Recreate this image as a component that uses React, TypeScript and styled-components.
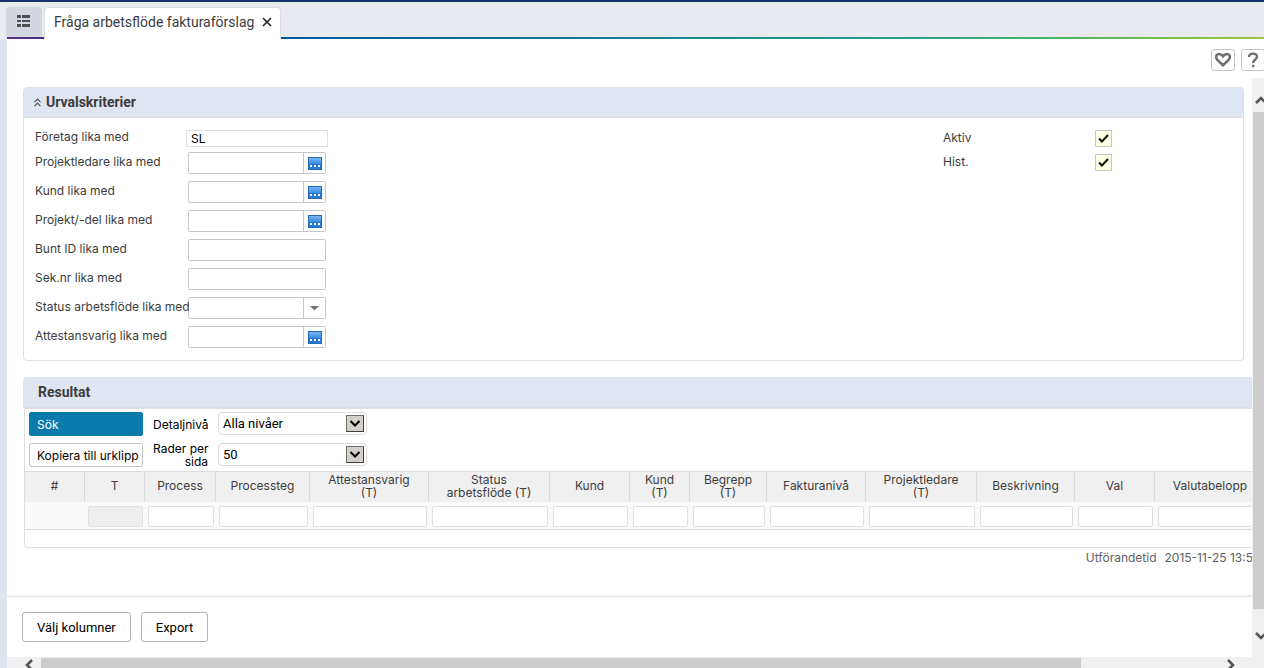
import React from "react";
import styled, { createGlobalStyle } from "styled-components";

const Global = createGlobalStyle`
  * { box-sizing: border-box; }
  body { margin: 0; background: #fff; color: #3c3c3c; overflow: hidden; }
  body, input, button, select { font-family: Inter, "Liberation Sans", sans-serif; font-size: 12px; }
  button { cursor: pointer; padding: 0; }
`;

const display = `font-family: Roboto, "Liberation Sans", sans-serif;`;

const Page = styled.div`
  display: flex;
  flex-direction: column;
  height: 100vh;
  border-top: 2px solid #16306a;
`;

const TabBar = styled.nav`
  display: flex;
  align-items: flex-end;
  gap: 2px;
  height: 37px;
  flex: none;
  padding-left: 6px;
  background:
    linear-gradient(90deg, #65338a 0, #3d2f85 44px, #00599a 280px, #1f9f8d 70%, #59b562 85%, #a2c43c 100%) 7px bottom / 100% 2px no-repeat,
    #eaebf0;
`;

const MenuTab = styled.button`
  display: grid;
  place-items: center;
  width: 36px;
  height: 30px;
  margin-bottom: 2px;
  border: 0;
  border-radius: 3px 3px 0 0;
  background: #d2d7e0;
  padding-bottom: 3px;
`;

const ActiveTab = styled.div`
  display: flex;
  align-items: center;
  gap: 7px;
  height: 32px;
  padding: 0 7px 3px 9px;
  border: 1px solid #dcdfe6;
  border-bottom: 0;
  border-radius: 4px 4px 0 0;
  background: #fff;
  ${display}
  font-size: 14px;
  white-space: nowrap;
`;

const CloseButton = styled.button`
  display: grid;
  place-items: center;
  width: 12px;
  height: 12px;
  border: 0;
  background: none;
`;

const Body = styled.div`
  display: flex;
  flex: 1;
  min-height: 0;
  border-left: 7px solid #e0e4ee;
`;

const Main = styled.main`
  display: flex;
  flex-direction: column;
  flex: 1;
  min-width: 0;
`;

const Toolbar = styled.div`
  display: flex;
  justify-content: flex-end;
  gap: 6px;
  height: 39px;
  flex: none;
  padding-top: 10px;
  overflow: hidden;
`;

const ToolButton = styled.button<{ $edge?: boolean }>`
  display: grid;
  place-items: center;
  width: 24px;
  height: 22px;
  margin-right: ${(p) => (p.$edge ? "-1px" : "0")};
  border: 1px solid #c6c6c6;
  border-radius: 3px;
  background: #fff;
`;

const Viewport = styled.div`
  display: flex;
  flex: 1;
  min-height: 0;
`;

const Column = styled.div`
  display: flex;
  flex-direction: column;
  flex: 1;
  min-width: 0;
`;

const Content = styled.div`
  flex: 1;
  min-height: 0;
  overflow: hidden;
  padding: 9px 0 0 16px;
`;

const Criteria = styled.section`
  margin-right: 8px;
  border: 1px solid #dedfe2;
  border-radius: 4px;
`;

const PanelHeader = styled.header<{ $inset?: boolean }>`
  display: flex;
  align-items: center;
  gap: 5px;
  height: ${(p) => (p.$inset ? "30px" : "31px")};
  padding: 0 0 1px ${(p) => (p.$inset ? "10px" : "15px")};
  border-bottom: 1px solid #dcdee2;
  border-radius: 4px 0 0 0;
  background: #dfe5f1;
`;

const Title = styled.h2`
  margin: 0;
  ${display}
  font-size: 14px;
  line-height: 16px;
  font-weight: 700;
`;

const CriteriaBody = styled.div`
  display: flex;
  justify-content: space-between;
  padding: 8px 12px 9px 11px;
`;

const Fields = styled.div`
  display: flex;
  flex-direction: column;
`;

const Field = styled.div<{ $compact?: boolean }>`
  display: flex;
  align-items: center;
  height: ${(p) => (p.$compact ? "22px" : "29px")};
`;

const FieldLabel = styled.label`
  position: relative;
  width: 151px;
  padding-bottom: 2px;
  white-space: nowrap;
`;

const PlainInput = styled.input`
  width: 142px;
  height: 17px;
  margin-top: 2px;
  padding: 0 4px;
  border: 1px solid #e0e0e0;
  color: #000;
`;

const Box = styled.div`
  display: flex;
  width: 138px;
  height: 22px;
  margin-left: 2px;
  border: 1px solid #c8c8c8;
  border-radius: 2px;
  overflow: hidden;
`;

const BoxInput = styled.input`
  flex: 1;
  min-width: 0;
  padding: 0 4px;
  border: 0;
  background: #fff;
`;

const BoxButton = styled.button`
  display: grid;
  place-items: center;
  width: 22px;
  padding-top: 1px;
  border: 0;
  border-left: 1px solid #c8c8c8;
  background: #fff;
`;

const Checks = styled.div`
  display: flex;
  flex-direction: column;
  width: 288px;
`;

const CheckRow = styled.div`
  display: flex;
  align-items: center;
  height: 24px;
`;

const CheckLabel = styled.label`
  width: 152px;
  padding-bottom: 2px;
`;

const CheckHolder = styled.span`
  position: relative;
  display: flex;
  svg { position: absolute; left: 3px; top: 4px; pointer-events: none; visibility: hidden; }
  input:checked + svg { visibility: visible; }
`;

const CheckInput = styled.input`
  appearance: none;
  width: 17px;
  height: 17px;
  margin: 0;
  border: 1px solid #c6c6c6;
  background: #ffffe6;
`;

const Result = styled.section`
  width: max-content;
  min-width: 100%;
  margin-top: 16px;
`;

const ResultBody = styled.div`
  margin-left: 1px;
  border: 1px solid #dedede;
  border-radius: 0 0 0 4px;
`;

const Controls = styled.div`
  display: grid;
  grid-template-columns: 114px 55px 149px;
  grid-auto-rows: 24px;
  column-gap: 10px;
  row-gap: 7px;
  align-items: start;
  padding: 3px 4px 4px;
  color: #000;
`;

const ActionButton = styled.button<{ $primary?: boolean }>`
  height: 24px;
  padding: 0 0 0 7px;
  border: 1px solid ${(p) => (p.$primary ? "#0d7aac" : "#c6c6c6")};
  border-radius: 2px;
  background: ${(p) => (p.$primary ? "#0d7aac" : "#fff")};
  color: ${(p) => (p.$primary ? "#fff" : "#000")};
  text-align: left;
  white-space: nowrap;
`;

const ControlLabel = styled.label`
  align-self: center;
  text-align: right;
  line-height: 13px;
  white-space: pre;
`;

const SelectHolder = styled.span`
  position: relative;
  display: flex;
  svg { position: absolute; right: 3px; top: 3px; pointer-events: none; }
`;

const Select = styled.select`
  appearance: none;
  width: 100%;
  height: 23px;
  padding: 0 4px;
  border: 1px solid #dcdcdc;
  border-radius: 4px;
  background: #fff;
  color: #000;
  ${display}
  font-size: 13px;
`;

const Table = styled.table`
  table-layout: fixed;
  border-collapse: separate;
  border-spacing: 0;
  width: 1241px;
  border-top: 1px solid #dcdcdc;
  border-bottom: 1px solid #dcdcdc;
`;

const HeadCell = styled.th`
  height: 30px;
  padding: 0 8px 3px;
  border-right: 1px solid #dadada;
  background: #f0f0f0;
  font-weight: 400;
  line-height: 13px;
  text-align: center;
  white-space: pre-line;
`;

const FilterCell = styled.td`
  height: 27px;
  padding: 1px 2px 0 3px;
  background: #fafafa;
`;

const FilterInput = styled.input`
  display: block;
  width: 100%;
  height: 21px;
  border: 1px solid #e0e0e0;
  border-radius: 2px;
  background: #fff;
  &:disabled { background: #eee; }
`;

const TableEnd = styled.div`
  height: 17px;
`;

const Timing = styled.p`
  display: flex;
  justify-content: flex-end;
  gap: 8px;
  margin: 2px 0 0;
  padding-right: 14px;
  line-height: 16px;
  color: #5f5f5f;
`;

const Footer = styled.footer`
  display: flex;
  align-items: center;
  gap: 10px;
  height: 61px;
  flex: none;
  padding-left: 15px;
  border-top: 1px solid #e6e6e6;
  box-shadow: 0 -1px 1px #f2f2f2;
`;

const FooterButton = styled.button`
  height: 30px;
  padding: 0 14px;
  border: 1px solid #b4b4b4;
  border-radius: 3px;
  background: #fff;
  color: #000;
  ${display}
  font-size: 13px;
`;

const VScroll = styled.div`
  display: flex;
  flex-direction: column;
  width: 12px;
  flex: none;
  overflow: hidden;
  background: #f0f0f0;
`;

const VThumb = styled.div`
  flex: 1;
  width: 15px;
  margin-left: 1px;
  background: #cdcdcd;
`;

const VArrow = styled.button<{ $end?: boolean }>`
  display: grid;
  place-items: center;
  width: 17px;
  height: ${(p) => (p.$end ? "48px" : "34px")};
  padding: ${(p) => (p.$end ? "6px 0 0" : "10px 0 0")};
  border: 0;
  background: none;
`;

const HScroll = styled.div`
  display: flex;
  align-items: flex-start;
  height: 11px;
  flex: none;
  overflow: hidden;
  background: #f0f0f0;
  padding-right: 25px;
`;

const HThumb = styled.div`
  flex: 1;
  height: 15px;
  margin-top: 1px;
  background: #cdcdcd;
`;

const HArrow = styled.button<{ $end?: boolean }>`
  display: flex;
  justify-content: flex-end;
  width: ${(p) => (p.$end ? "158px" : "34px")};
  padding: 2px ${(p) => (p.$end ? "4px" : "8px")} 0 0;
  border: 0;
  background: none;
`;

const Chevron = ({ points, w, h }: { points: string; w: number; h: number }) => (
  <svg width={w} height={h} viewBox={`0 0 ${w} ${h}`} fill="none" stroke="#555" strokeWidth="2.6">
    <polyline points={points} />
  </svg>
);

const LookupIcon = () => (
  <svg width="14" height="13" viewBox="0 0 14 13">
    <defs>
      <linearGradient id="lookup" x1="0" y1="0" x2="0" y2="1">
        <stop offset="0" stopColor="#7db9f5" />
        <stop offset="0.5" stopColor="#3b8fe8" />
        <stop offset="0.55" stopColor="#1f74d2" />
        <stop offset="1" stopColor="#2b80da" />
      </linearGradient>
    </defs>
    <rect x="0.5" y="0.5" width="13" height="12" fill="url(#lookup)" stroke="#2468b4" />
    <path d="M2 8h2v2H2zM6 8h2v2H6zM10 8h2v2h-2z" fill="#fff" />
  </svg>
);

const SelectArrow = () => (
  <svg width="18" height="17" viewBox="0 0 18 17">
    <rect x="0.5" y="0.5" width="17" height="16" fill="#d4d0c8" stroke="#6e6e6e" />
    <path d="M0.5 16.5h17V0.5" fill="none" stroke="#404040" />
    <path d="M4.5 6l4.5 4.5L13.5 6" fill="none" stroke="#000" strokeWidth="2" />
  </svg>
);

type Kind = "plain" | "lookup" | "text" | "drop";
const fields: { id: string; label: string; kind: Kind }[] = [
  { id: "foretag", label: "Företag lika med", kind: "plain" },
  { id: "projektledare", label: "Projektledare lika med", kind: "lookup" },
  { id: "kund", label: "Kund lika med", kind: "lookup" },
  { id: "projekt", label: "Projekt/-del lika med", kind: "lookup" },
  { id: "bunt", label: "Bunt ID lika med", kind: "text" },
  { id: "seknr", label: "Sek.nr lika med", kind: "text" },
  { id: "status", label: "Status arbetsflöde lika med", kind: "drop" },
  { id: "attest", label: "Attestansvarig lika med", kind: "lookup" },
];

const columns: [string, number][] = [
  ["#", 60], ["T", 60], ["Process", 71], ["Processteg", 94], ["Attestansvarig\n(T)", 119],
  ["Status\narbetsflöde (T)", 121], ["Kund", 80], ["Kund\n(T)", 60], ["Begrepp\n(T)", 77],
  ["Fakturanivå", 99], ["Projektledare\n(T)", 111], ["Beskrivning", 98], ["Val", 80], ["Valutabelopp", 111],
];

export default function App() {
  return (
    <Page>
      <Global />
      <TabBar>
        <MenuTab aria-label="Meny">
          <svg width="14" height="14" viewBox="0 0 14 14" fill="#505050">
            <path d="M0 1h4v3H0zM5 1h8v3H5zM0 6h4v2H0zM5 6h8v2H5zM0 10h4v3H0zM5 10h8v3H5z" />
          </svg>
        </MenuTab>
        <ActiveTab>
          <span>Fråga arbetsflöde fakturaförslag</span>
          <CloseButton aria-label="Stäng">
            <svg width="10" height="10" viewBox="0 0 10 10" stroke="#222" strokeWidth="1.6">
              <path d="M1 1l8 8M9 1l-8 8" />
            </svg>
          </CloseButton>
        </ActiveTab>
      </TabBar>
      <Body>
        <Main>
          <Toolbar>
            <ToolButton aria-label="Favorit">
              <svg width="18" height="16" viewBox="0 0 18 16" fill="none" stroke="#707070" strokeWidth="2.6">
                <path d="M9 13.2L3.2 7.6C1 5 2.400 2 5 2C7 2 8.200 3 9 4.200C9.800 3 11 2 13 2C15.600 2 17 5 14.800 7.600Z" />
              </svg>
            </ToolButton>
            <ToolButton $edge aria-label="Hjälp">
              <svg width="12" height="16" viewBox="0 0 12 16" fill="none" stroke="#707070" strokeWidth="2.4">
                <path d="M2 5C2 0.5 10 0.5 10 4.7C10 7.5 6.2 7.5 6.2 11" />
                <path d="M6.2 12.8v2.4" />
              </svg>
            </ToolButton>
          </Toolbar>
          <Viewport>
            <Column>
              <Content>
                <Criteria>
                  <PanelHeader $inset>
                    <svg width="7" height="9" viewBox="0 0 7 9" fill="none" stroke="#555" strokeWidth="1.2">
                      <path d="M0.5 4.2l3-3l3 3M0.5 8.2l3-3l3 3" />
                    </svg>
                    <Title>Urvalskriterier</Title>
                  </PanelHeader>
                  <CriteriaBody>
                    <Fields>
                      {fields.map((f) => (
                        <Field key={f.id} $compact={f.kind === "plain"}>
                          <FieldLabel htmlFor={f.id}>{f.label}</FieldLabel>
                          {f.kind === "plain" ? (
                            <PlainInput id={f.id} defaultValue="SL" />
                          ) : (
                            <Box>
                              <BoxInput id={f.id} />
                              {f.kind === "lookup" && (
                                <BoxButton aria-label={`Sök ${f.label}`}><LookupIcon /></BoxButton>
                              )}
                              {f.kind === "drop" && (
                                <BoxButton aria-label={`Välj ${f.label}`}>
                                  <svg width="9" height="5" viewBox="0 0 9 5"><path d="M0 0h9L4.5 4.5z" fill="#777" /></svg>
                                </BoxButton>
                              )}
                            </Box>
                          )}
                        </Field>
                      ))}
                    </Fields>
                    <Checks>
                      {["Aktiv", "Hist."].map((name) => (
                        <CheckRow key={name}>
                          <CheckLabel htmlFor={name}>{name}</CheckLabel>
                          <CheckHolder>
                            <CheckInput id={name} type="checkbox" defaultChecked />
                            <svg width="11" height="9" viewBox="0 0 11 9" fill="none" stroke="#111" strokeWidth="2">
                              <path d="M1 4.5l3 3L10 1" />
                            </svg>
                          </CheckHolder>
                        </CheckRow>
                      ))}
                    </Checks>
                  </CriteriaBody>
                </Criteria>
                <Result>
                  <PanelHeader><Title>Resultat</Title></PanelHeader>
                  <ResultBody>
                    <Controls>
                      <ActionButton $primary>Sök</ActionButton>
                      <ControlLabel htmlFor="detalj">Detaljnivå</ControlLabel>
                      <SelectHolder>
                        <Select id="detalj"><option>Alla nivåer</option></Select>
                        <SelectArrow />
                      </SelectHolder>
                      <ActionButton>Kopiera till urklipp</ActionButton>
                      <ControlLabel htmlFor="rader">{"Rader per\nsida"}</ControlLabel>
                      <SelectHolder>
                        <Select id="rader"><option>50</option></Select>
                        <SelectArrow />
                      </SelectHolder>
                    </Controls>
                    <Table>
                      <colgroup>
                        {columns.map(([name, width]) => <col key={name} width={width} />)}
                      </colgroup>
                      <thead>
                        <tr>{columns.map(([name]) => <HeadCell key={name} scope="col">{name}</HeadCell>)}</tr>
                      </thead>
                      <tbody>
                        <tr>
                          {columns.map(([name], i) => (
                            <FilterCell key={name}>
                              {i > 0 && <FilterInput aria-label={name} disabled={i === 1} />}
                            </FilterCell>
                          ))}
                        </tr>
                      </tbody>
                    </Table>
                    <TableEnd />
                  </ResultBody>
                  <Timing><span>Utförandetid</span><span>2015-11-25 13:5</span></Timing>
                </Result>
              </Content>
              <Footer>
                <FooterButton>Välj kolumner</FooterButton>
                <FooterButton>Export</FooterButton>
              </Footer>
            </Column>
            <VScroll>
              <VArrow aria-label="Rulla upp"><Chevron w={12} h={8} points="1,7 6,2 11,7" /></VArrow>
              <VThumb />
              <VArrow $end aria-label="Rulla ned"><Chevron w={12} h={8} points="1,1 6,6 11,1" /></VArrow>
            </VScroll>
          </Viewport>
          <HScroll>
            <HArrow aria-label="Rulla vänster"><Chevron w={8} h={12} points="7,1 2,6 7,11" /></HArrow>
            <HThumb />
            <HArrow $end aria-label="Rulla höger"><Chevron w={8} h={12} points="1,1 6,6 1,11" /></HArrow>
          </HScroll>
        </Main>
      </Body>
    </Page>
  );
}
